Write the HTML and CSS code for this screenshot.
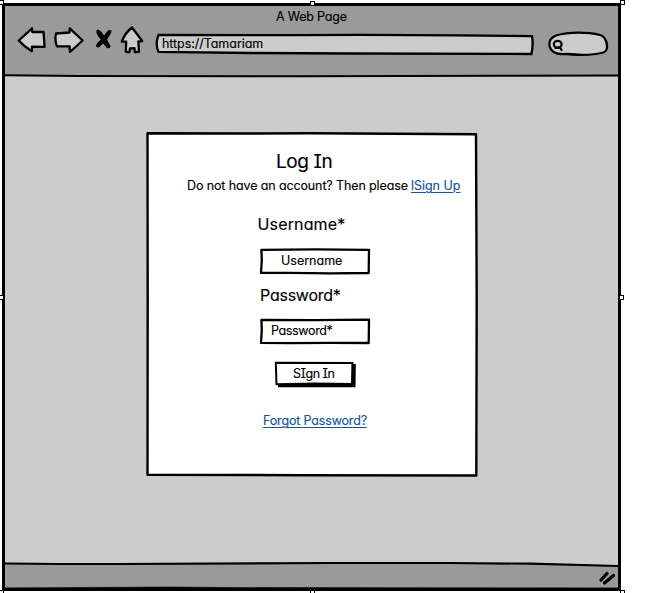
FILE: index.html
```html
<!DOCTYPE html>
<html lang="en">
<head>
<meta charset="utf-8">
<title>A Web Page</title>
<link rel="stylesheet" href="styles.css">
</head>
<body>
<div class="window">
  <header class="chrome">
    <div class="title"><span>A Web Page</span></div>
    <div class="toolbar">
      <svg class="nav" width="140" height="36" viewBox="10 24 140 36">
        <g fill="#ccc" stroke="#000" stroke-width="2.3" stroke-linejoin="round">
          <path d="M18.800 40.500 L32 28.300 L32.300 32 L43.500 31.800 Q44 39 44.600 46.800 L32 46.600 L31.800 51.300 Q24 46.500 18.800 40.500Z"/>
          <path d="M56 33.500 L69.500 32.500 L69.700 28.300 L82.600 40.500 L70 52 L69.600 46.400 L57 46.400 Q54.500 40 56 33.500Z"/>
          <path d="M132 27.500 L142.200 41 L138.300 41.500 L139 51.800 L134.800 52 L134.500 48.200 L130 48.500 L129.500 52 L125.800 51.800 L126.200 41.600 L121.800 41.500 Q125 33 132 27.500Z"/>
        </g>
        <path transform="translate(0 .6)" d="M96.500 29.300 Q99 28 101.500 31.500 L104 35 L107.500 30.300 Q110 28.500 111.500 30 Q112 32 107 39 L110.500 45.500 Q110.500 48.500 107 47.300 L103 43 L99.500 46.500 Q96.500 47.500 96 45.500 Q96 43.500 100.800 39 Q95.500 33 96.500 29.300Z"/>
      </svg>
      <div class="address">
        <svg class="sketch" width="382" height="24" viewBox="154 32 382 24"><path d="M158.500 35 L300 35.200 L360 34.800 L458 35.300 L532 36.200 Q533.500 44 531.500 54 L350 53.500 L250 53 L158.500 51.800 Q154.800 44 158.500 35Z" fill="#ccc" stroke="#000" stroke-width="2.300"/></svg>
        <span class="url">https://Tamariam</span>
      </div>
      <svg class="search" width="62" height="28" viewBox="547 30 62 28">
        <path d="M557 53.500 C547 50 547 39 556 35.500 C569 31.500 588 32 600 35 Q606.500 37 607 46 Q607.500 50.500 603.500 52.500 C592 55.500 579 55.200 567 54 Q561 54.200 557 53.500Z" fill="#ccc" stroke="#000" stroke-width="2.300"/>
        <ellipse cx="557.700" cy="44.300" rx="3.900" ry="3.400" fill="none" stroke="#000" stroke-width="2.200"/>
        <path d="M554.500 48 L560 47.500 L562 50.800" fill="none" stroke="#000" stroke-width="2.200"/>
      </svg>
    </div>
  </header>
  <main class="page">
    <svg class="rule" width="613" height="6" viewBox="5 72 613 6"><path d="M5 72 H618 V75.300 L300 76 L80 76 L5 75Z" fill="#9a9a9a"/><path d="M5 75.300 L80 76 L300 76.200 L500 75.800 L618 75.600" fill="none" stroke="#000" stroke-width="2"/></svg>
    <form class="card">
      <svg class="sketch" width="334" height="346" viewBox="145 131 334 346"><path d="M147.500 133.300 L250 133.500 L310 133.200 L476 134.200 L476.700 300 L476.300 475.500 L300 475.200 L147.500 474.700 L147.700 300Z" fill="#fff" stroke="#000" stroke-width="2.400" stroke-linejoin="round"/></svg>
      <h1><span>Log In</span></h1>
      <p class="prompt"><span class="ask">Do not have an account? Then please</span><a class="signup">lSign Up</a></p>
      <label class="label-user">Username*</label>
      <div class="field field-user">
        <svg class="sketch" width="112" height="28" viewBox="259 247 112 28"><path d="M261.400 249.800 L315 249.400 L369 249.800 L368.700 273 L330 273.400 L290 272.900 L261 272.900 L261.800 260Z" fill="#fff" stroke="#000" stroke-width="2.300" stroke-linejoin="round"/></svg>
        <span>Username</span>
      </div>
      <label class="label-pass">Password*</label>
      <div class="field field-pass">
        <svg class="sketch" width="112" height="28" viewBox="259 317 112 28"><path d="M261.400 319.800 L315 320.100 L369 319.700 L368.700 343 L330 342.900 L290 343.200 L261 342.900 L261.800 330Z" fill="#fff" stroke="#000" stroke-width="2.300" stroke-linejoin="round"/></svg>
        <span>Password*</span>
      </div>
      <div class="button">
        <svg class="sketch" width="84" height="28" viewBox="274 360 84 28"><path d="M278 364 L355.800 364 L355.500 387.300 L278 387.300Z"/><path d="M275.800 362.800 L352.400 362.900 L352 384 L315 383.500 L276.500 384.200Z" fill="#fff" stroke="#000" stroke-width="2"/></svg>
        <span>SIgn In</span>
      </div>
      <a class="forgot">Forgot Password?</a>
    </form>
  </main>
  <footer class="status">
    <svg class="sketch" width="613" height="28" viewBox="5 560 613 28"><path d="M5 563.500 L120 564 L330 563 L450 563 L530 563.800 L618 566 V588 H5Z" fill="#9a9a9a"/><path d="M5 563.500 L60 564 L120 564 L330 563 L450 563 L530 563.700 L618 566" fill="none" stroke="#000" stroke-width="2.200"/><path d="M601 580 L607 573.500 M604.500 583 L613.500 575.500" stroke="#000" stroke-width="3.300" stroke-linecap="round"/><path d="M5 588 L130 587.200 L170 586.900 L230 587.600 L618 588Z" stroke="#000" stroke-width=".5"/></svg>
  </footer>
  <i class="handle tl"></i><i class="handle tc"></i><i class="handle tr"></i>
  <i class="handle ml"></i><i class="handle mr"></i>
  <i class="handle bl"></i><i class="handle bc"></i><i class="handle br"></i>
</div>
</body>
</html>
```
FILE: styles.css
```css
* { box-sizing: border-box; }
html, body { margin: 0; background: #fff; overflow: hidden; }
body {
  height: 593px;
  padding: 3px 0 0 2px;
  font: 12.5px/16px Inter, "Open Sans", sans-serif;
  font-feature-settings: "cv11", "cv08";
  -webkit-text-stroke: .15px currentColor;
  color: #000;
}
svg { display: block; flex: none; }
.window {
  position: relative;
  display: flex;
  flex-direction: column;
  width: 619px;
  height: 588px;
  border: 3px solid #000;
  background: #ccc;
}
.chrome { height: 66px; background: #9a9a9a; }
.title { height: 18px; padding: 3px 0 0 271px; letter-spacing: -.2px; }
.toolbar { display: flex; align-items: flex-start; padding-left: 5px; }
.address { position: relative; width: 382px; height: 24px; margin: 8px 0 0 4px; padding: 4px 0 0 8px; }
.url { letter-spacing: -.05px; }
.search { margin: 6px 0 0 11px; }
.sketch { position: absolute; left: 0; top: 0; }
span, a { position: relative; white-space: nowrap; }
.page { flex: 1; }
.card {
  position: relative;
  display: flex;
  flex-direction: column;
  align-items: flex-start;
  width: 334px;
  height: 346px;
  margin: 59px 0 0 140px;
}
h1 { margin: 18px 0 0 131px; font-size: 19px; line-height: 26px; font-weight: 400; letter-spacing: -.4px; }
.prompt { display: flex; margin: 3px 0 0 42px; gap: 3px; letter-spacing: -.12px; }
a { color: #14559a; text-decoration: underline; text-underline-offset: 2px; text-decoration-thickness: 1px; }
.signup { font-feature-settings: "cv11"; letter-spacing: 0; }
label { position: relative; font-size: 16px; line-height: 20px; }
.label-user { margin: 20px 0 0 112.500px; letter-spacing: .15px; }
.label-pass { margin: 10px 0 0 115px; letter-spacing: -.25px; }
.field { position: relative; width: 112px; height: 28px; margin-left: 114px; padding-top: 6px; }
.field-user { margin-top: 13px; padding-left: 22px; }
.field-pass { margin-top: 12px; padding-left: 12px; letter-spacing: -.35px; }
.button { position: relative; width: 84px; height: 28px; margin: 15px 0 0 129px; padding: 6px 0 0 19px; letter-spacing: -.5px; }
.forgot { margin: 25px 0 0 118px; letter-spacing: -.16px; }
.status { position: relative; height: 26px; }
.status .sketch { top: -2px; }
.handle { position: absolute; width: 5px; height: 5px; background: #fff; border: 1px solid #000; }
.tl, .tc, .tr { top: -6px; }
.tc { top: -5px; }
.ml, .mr { top: 289px; }
.bl, .bc, .br { top: 584px; }
.tl, .ml, .bl { left: -6px; }
.tc, .bc { left: 305px; }
.tr, .br { left: 615px; }
.mr { left: 614px; }
.rule { margin-bottom: -6px; }
```
